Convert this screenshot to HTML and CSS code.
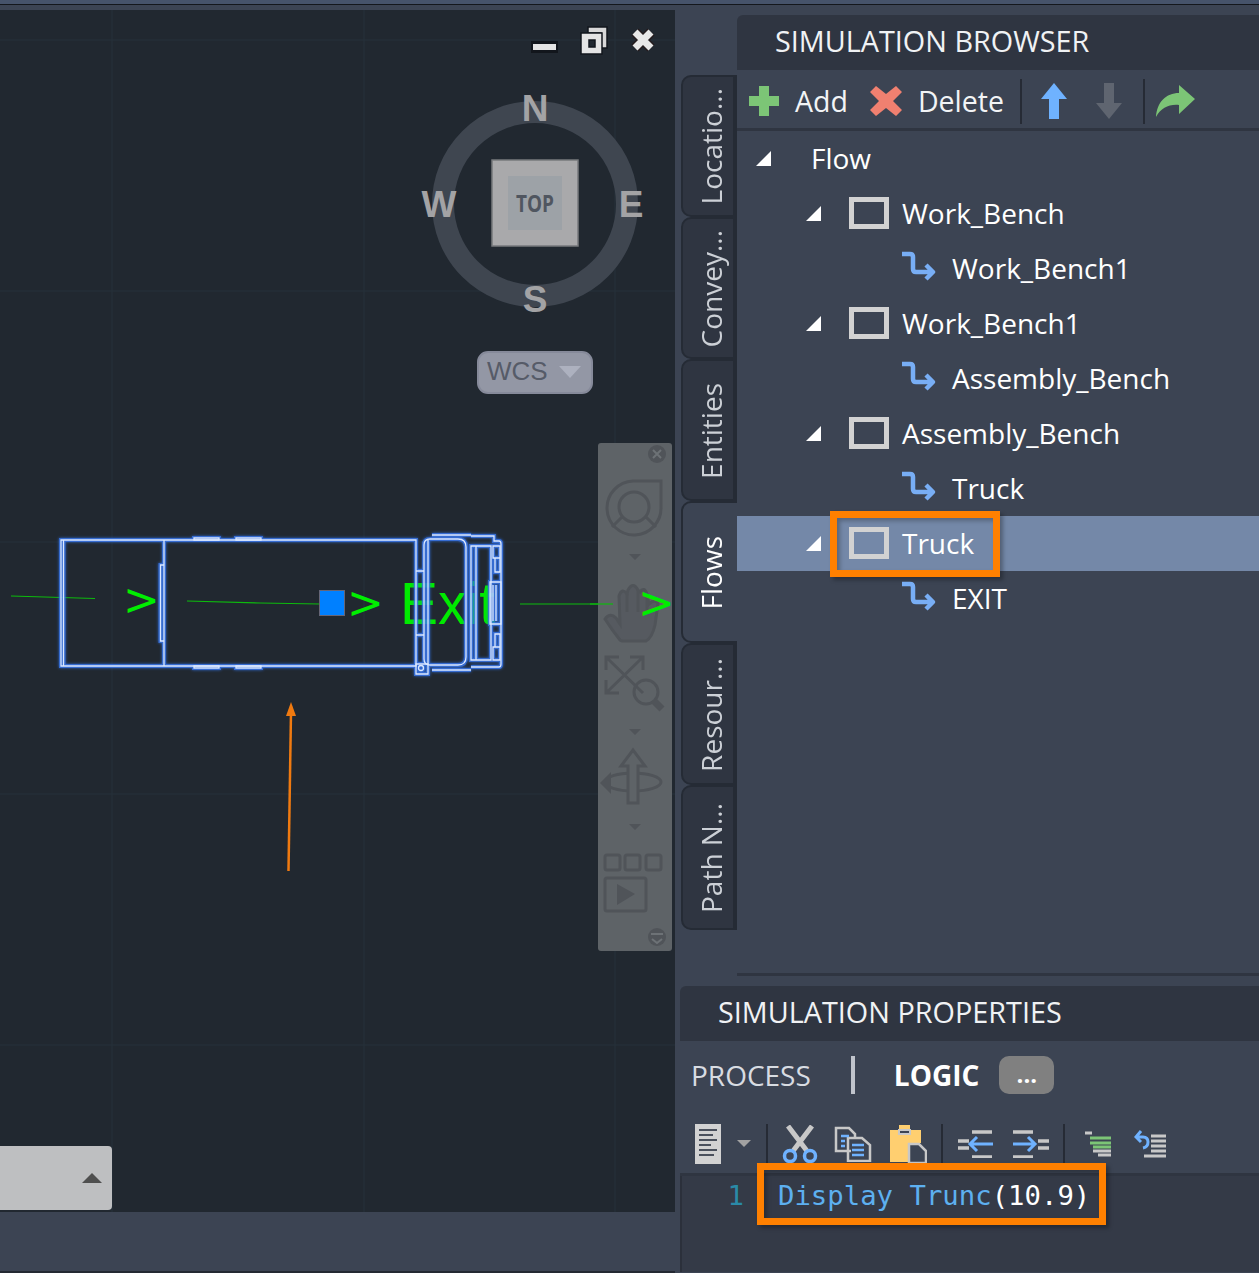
FILE: index.html
```html
<!DOCTYPE html>
<html lang="en">
<head>
<meta charset="utf-8">
<title>Simulation</title>
<link rel="stylesheet" href="styles.css">
</head>
<body>
<div class="topbar"></div>
<div class="workspace">
  <main class="viewport">
    <svg class="canvas" width="675" height="1202" viewBox="0 10 675 1202">
      <defs>
        <g id="truck">
          <path d="M61 540H416V666H61ZM63.500 540V666M164 540V666M160.500 565H164V641H160.500Z"/>
          <path d="M194 538H219V540H194ZM236 538H261V540H236ZM194 666H219V668H194ZM236 666H261V668H236Z"/>
          <path d="M416 571H424M416 635H424M424 545Q424 539 430 539H458Q466 539 466 547V657Q466 665 458 665H430Q424 665 424 659ZM428 539V665"/>
          <path d="M432 535H471M432 670H471M471 536H494V541H499Q501 541 501 544V664Q501 667 499 667H471"/>
          <path d="M471 546H491V660H471ZM476 546V660M493 546H500V558H493ZM495 558H500V572H495ZM495 634H500V647H495ZM493 647H500V660H493Z"/>
          <path d="M490 582H501V624H490ZM493 585V621M496 585V621"/>
          <path d="M416 664H428V674H416Z"/>
          <circle cx="421" cy="668" r="2.500"/>
        </g>
      </defs>
      <path class="grid" d="M112 10V1212M364 10V1212M615 10V1212M0 40H675M0 291H675M0 542H675M0 794H675M0 1045H675"/>

      <path class="route" d="M11 596L95 598.500M187 601L260 603L320 604M520 604H613"/>
      <text class="chevron" x="123" y="615">&gt;</text>
      <text class="chevron" x="347" y="618">&gt;</text>
      <text class="exit" x="400" y="624" textLength="95" lengthAdjust="spacingAndGlyphs">Exit</text>
      <rect class="marker" x="319.500" y="590.500" width="25" height="25"/>

      <use href="#truck" class="truck-glow"/>
      <use href="#truck" class="truck-line"/>

      <path class="up-line" d="M288.500 871L291 712"/>
      <path class="up-head" d="M291 702L296 716H286Z"/>

      <circle class="ring" cx="535" cy="204" r="92"/>
      <text class="cube-dir" x="535" y="121">N</text>
      <text class="cube-dir" x="439" y="217">W</text>
      <text class="cube-dir" x="631" y="217">E</text>
      <text class="cube-dir" x="535" y="312">S</text>
      <rect class="cube" x="492" y="160" width="86" height="86"/>
      <rect class="cube-face" x="508" y="176" width="54" height="54"/>
      <text class="cube-label" x="516" y="212" textLength="38" lengthAdjust="spacingAndGlyphs">TOP</text>
      <rect class="wcs" x="478" y="352" width="114" height="41" rx="10"/>
      <text class="wcs-label" x="487" y="380">WCS</text>
      <path class="wcs-arrow" d="M559 366H581L570 378Z"/>

      <rect class="win-edge" x="531" y="41" width="27" height="12"/>
      <rect class="win-fill" x="533" y="44" width="23" height="6"/>
      <path class="win-back" d="M588 27H607V48H601V33H588Z"/>
      <path class="win-front" fill-rule="evenodd" d="M581 33H602V54H581ZM589 40V47H595V40Z"/>
      <path class="win-x-edge" d="M635 32L651 48M651 32L635 48"/>
      <path class="win-x" d="M635 32L651 48M651 32L635 48"/>

      <rect class="nav-bar" x="598" y="443" width="74" height="508" rx="3"/>
      <g class="nav-lines">
        <circle class="nav-solid" cx="657" cy="454" r="9"/>
        <path class="nav-cut" d="M653 450L661 458M661 450L653 458"/>
        <path d="M633 481H661V507A27 27 0 1 1 633 481Z"/>
        <circle cx="634" cy="507" r="15"/>
        <path d="M622 517L612 527M646 517L656 527"/>
        <path class="nav-hand" d="M620 640Q612 630 605 619Q610 612 616 618L620 624L619 596Q622 587 627 594L628 590Q633 581 638 590L640 592Q644 586 647 594L649 604Q655 598 658 604L655 625Q652 638 646 641H622Z"/>
        <path d="M627 594V612M638 590V612M647 594V612"/>
        <path d="M606 657L643 693M643 657L606 693M606 670V657H619M630 657H643V670M606 680V693H619"/>
        <circle cx="646" cy="692" r="12"/>
        <path class="nav-thick" d="M654 701L662 709"/>
        <ellipse cx="633" cy="782" rx="28" ry="9"/>
        <path class="nav-fill" d="M628 803V766H621L633 750L645 766H638V803Z"/>
        <path class="nav-solid" d="M611 772V794L600 783Z"/>
        <rect x="605" y="855" width="15" height="15" rx="2"/>
        <rect x="625" y="855" width="15" height="15" rx="2"/>
        <rect x="646" y="855" width="15" height="15" rx="2"/>
        <rect x="605" y="878" width="41" height="33" rx="2"/>
        <path class="nav-solid" d="M617 884L635 894L617 905Z"/>
        <circle class="nav-solid" cx="657" cy="937" r="9"/>
        <path class="nav-cut" d="M651 934H663M652 939L657 943L662 939"/>
      </g>
      <path class="nav-solid nav-tri" d="M629 554H641L635 560ZM629 729H641L635 735ZM629 824H641L635 830Z"/>
      <path class="route" d="M590 604H613"/>
      <text class="chevron" x="638" y="618">&gt;</text>
    </svg>
    <div class="drawer"><span class="drawer-caret"></span></div>
  </main>

  <aside class="sidebar">
    <section class="browser">
      <nav class="tabs">
        <div class="tab"><span>Locatio...</span></div>
        <div class="tab"><span>Convey...</span></div>
        <div class="tab"><span>Entities</span></div>
        <div class="tab tab-active"><span>Flows</span></div>
        <div class="tab"><span>Resour...</span></div>
        <div class="tab tab-last"><span>Path N...</span></div>
      </nav>
      <div class="browser-panel">
        <h2 class="panel-title browser-title">SIMULATION BROWSER</h2>
        <div class="browser-tools">
          <svg class="tool-plus" width="32" height="32" viewBox="0 0 32 32"><path class="ico-green" d="M11 1H21V11H31V21H21V31H11V21H1V11H11Z"/></svg>
          <span class="tool-label tool-add">Add</span>
          <svg class="tool-del" width="34" height="32" viewBox="0 0 34 32"><path class="ico-red" d="M7 1L17 9L27 1L33 7L24 16L33 25L27 31L17 23L7 31L1 25L10 16L1 7Z"/></svg>
          <span class="tool-label tool-delete">Delete</span>
          <span class="tool-sep sep-a"></span>
          <svg width="28" height="38" viewBox="0 0 28 38"><path class="ico-blue" d="M14 1L27 17H19V37H9V17H1Z"/></svg>
          <svg class="tool-down" width="28" height="38" viewBox="0 0 28 38"><path class="ico-grey" d="M14 37L27 21H19V1H9V21H1Z"/></svg>
          <span class="tool-sep sep-b"></span>
          <svg class="tool-redo" width="40" height="34" viewBox="0 0 40 34"><path class="ico-green" d="M24 1L40 15L24 30V21C14 20 6 24 1 33C2 18 11 9 24 9Z"/></svg>
        </div>
        <ul class="tree">
          <li class="row lvl0"><i class="caret"></i><span>Flow</span></li>
          <li class="row lvl1"><i class="caret"></i><b class="station"></b><span>Work_Bench</span></li>
          <li class="row lvl2"><svg class="route-ico" width="36" height="36" viewBox="0 0 36 36"><path d="M1 4H9Q12 4 12 7V19Q12 22 15 22H31M25 15L32 22L25 29"/></svg><span>Work_Bench1</span></li>
          <li class="row lvl1"><i class="caret"></i><b class="station"></b><span>Work_Bench1</span></li>
          <li class="row lvl2"><svg class="route-ico" width="36" height="36" viewBox="0 0 36 36"><path d="M1 4H9Q12 4 12 7V19Q12 22 15 22H31M25 15L32 22L25 29"/></svg><span>Assembly_Bench</span></li>
          <li class="row lvl1"><i class="caret"></i><b class="station"></b><span>Assembly_Bench</span></li>
          <li class="row lvl2"><svg class="route-ico" width="36" height="36" viewBox="0 0 36 36"><path d="M1 4H9Q12 4 12 7V19Q12 22 15 22H31M25 15L32 22L25 29"/></svg><span>Truck</span></li>
          <li class="row lvl1 row-selected"><i class="caret"></i><b class="station"></b><span>Truck</span><div class="callout callout-truck"></div></li>
          <li class="row lvl2"><svg class="route-ico" width="36" height="36" viewBox="0 0 36 36"><path d="M1 4H9Q12 4 12 7V19Q12 22 15 22H31M25 15L32 22L25 29"/></svg><span>EXIT</span></li>
        </ul>
      </div>
    </section>

    <section class="props">
      <h2 class="panel-title props-title">SIMULATION PROPERTIES</h2>
      <div class="props-tabs">
        <span class="prop-tab">PROCESS</span>
        <span class="prop-sep"></span>
        <span class="prop-tab prop-active">LOGIC</span>
        <span class="prop-more">...</span>
      </div>
      <div class="props-tools">
        <svg width="28" height="42" viewBox="0 0 28 42"><rect class="ico-paper" x="1" y="1" width="26" height="40"/><path class="ico-doclines" d="M5 7H23M5 12H19M5 17H23M5 22H17M5 27H23M5 32H20"/></svg>
        <i class="mini-caret"></i>
        <span class="code-sep sep-1"></span>
        <svg class="ti-cut" width="36" height="38" viewBox="0 0 36 38"><path class="ico-cut" d="M6 1L25 26M30 1L11 26"/><circle class="ico-ring" cx="8" cy="31" r="5.500"/><circle class="ico-ring" cx="28" cy="31" r="5.500"/></svg>
        <svg class="ti-copy" width="38" height="36" viewBox="0 0 38 36"><path class="ico-outline" d="M17 25H2V2H15L21 8V12M14 12H28L36 19V35H14Z"/><path class="ico-bluel" d="M7 10H15M7 15H11M7 20H11M18 19H30M18 24H30M18 29H30"/></svg>
        <svg class="ti-paste" width="38" height="40" viewBox="0 0 38 40"><path class="ico-yellow" d="M1 6H10V1H21V6H32V19H19V38H1Z"/><path class="ico-dark" d="M10 6H21V10H10Z"/><path class="ico-page" d="M20 20H30L37 27V39H20Z"/></svg>
        <span class="code-sep sep-2"></span>
        <svg class="ti-indent" width="38" height="28" viewBox="0 0 38 28"><path class="ico-lines" d="M15 2H35M1 11H12M1 18H12M15 27H35"/><path class="ico-bluea" d="M36 14H13M20 7L13 14L20 21"/></svg>
        <svg class="ti-indent2" width="38" height="28" viewBox="0 0 38 28"><path class="ico-lines" d="M1 2H21M26 11H37M26 18H37M1 27H21"/><path class="ico-bluea" d="M1 14H23M16 7L23 14L16 21"/></svg>
        <span class="code-sep sep-3"></span>
        <svg class="ti-comment" width="28" height="26" viewBox="0 0 28 26"><path class="ico-thin" d="M1 2H8M14 24H27M9 20H27"/><path class="ico-greenl" d="M6 7H27M6 12H27M9 16H27"/></svg>
        <svg class="ti-uncomment" width="32" height="30" viewBox="0 0 32 30"><path class="ico-thin" d="M17 7H32M17 12H32M17 17H32M17 22H32M10 27H32"/><path class="ico-bluel2" d="M2 8H9Q14 8 14 13T9 19M7 2L2 8L7 13"/></svg>
      </div>
      <div class="code">
        <span class="line-no">1</span>
        <code class="code-text"><span class="kw">Display Trunc</span>(10.9)</code>
        <div class="callout callout-code"></div>
      </div>
    </section>
  </aside>
</div>
<div class="bottom-line"></div>
</body>
</html>
```
FILE: styles.css
```css
* { box-sizing: border-box; }
html, body { margin: 0; height: 1273px; overflow: hidden; }
body { background: #3c4453; color: #fff; font-family: "Open Sans", "Noto Sans", sans-serif; }

.topbar { height: 5px; background: #46536a; border-bottom: 1px solid #14171c; }
.workspace { display: flex; height: 1266px; }
.bottom-line { height: 2px; width: 675px; background: #242933; }

/* Viewport */
.viewport { position: relative; flex: 0 0 675px; height: 1202px; margin-top: 5px; background: #212830; overflow: hidden; }
.canvas { position: absolute; left: 0; top: 0; }
.grid { stroke: #27303a; stroke-width: 1; fill: none; }
.route { stroke: #0dbb0d; stroke-width: 1.200; fill: none; }
.chevron { fill: #00ee00; font: 44px "DejaVu Sans", sans-serif; }
.exit { fill: #00ea00; font: 59px "Liberation Sans", sans-serif; }
.marker { fill: #0080ff; stroke: #667; stroke-width: 1; }
.truck-glow { fill: none; stroke: #3a78ee; stroke-width: 4; opacity: .85; filter: drop-shadow(0 0 1.500px #2f6fe0); }
.truck-line { fill: none; stroke: #dbe8ff; stroke-width: 1.300; }
.up-line { stroke: #f07a10; stroke-width: 2.500; fill: none; }
.up-head { fill: #f07a10; }
.ring { fill: none; stroke: #3f4650; stroke-width: 22; }
.cube-dir { fill: #a3a3a5; font: bold 37px "Liberation Sans", sans-serif; text-anchor: middle; }
.cube { fill: #a9a9ab; stroke: #77797c; stroke-width: 1.500; }
.cube-face { fill: #9da2a7; }
.cube-label { fill: #505660; font: bold 24px "Open Sans", sans-serif; }
.wcs { fill: #9397a5; stroke: #868a9a; stroke-width: 2; }
.wcs-label { fill: #565b68; font: 26px "Liberation Sans", sans-serif; }
.wcs-arrow { fill: #adb1bf; }
.win-edge { fill: #12161c; }
.win-fill { fill: #e4e4e4; }
.win-back { fill: #d8d8d8; stroke: #12161c; stroke-width: 1.500; }
.win-front { fill: #e4e4e4; stroke: #12161c; stroke-width: 1.500; }
.win-x-edge { stroke: #241c1e; stroke-width: 10; fill: none; }
.win-x { stroke: #e8e8e8; stroke-width: 7; fill: none; }
.nav-bar { fill: #5e6367; }
.nav-lines { fill: none; stroke: #505459; stroke-width: 3; }
.nav-solid { fill: #505459; stroke: none; }
.nav-cut { stroke: #6d7276; stroke-width: 2; fill: none; }
.nav-fill { fill: #5e6367; }
.nav-hand { fill: #565a60; }
.nav-thick { stroke-width: 7; }
.drawer { position: absolute; left: 0; top: 1136px; display: flex; align-items: center; justify-content: flex-end; width: 112px; height: 64px; padding: 0 10px 0 0; background: #bebfc1; border-radius: 0 4px 4px 0; }
.drawer-caret { width: 0; height: 0; border-left: 10px solid transparent; border-right: 10px solid transparent; border-bottom: 10px solid #4f4f4f; }

/* Sidebar */
.sidebar { flex: 1; min-width: 0; padding: 10px 0 0 5px; }
.browser { display: flex; height: 961px; }
.tabs { flex: 0 0 57px; display: flex; flex-direction: column; padding: 60px 0 0 1px; }
.tab { display: flex; justify-content: center; align-items: center; height: 142px; padding: 1px 0 0 6px; background: #2f3541; border: 2px solid #252b35; border-right-width: 4px; border-radius: 10px 0 0 10px; color: #ccd0d6; font-size: 28px; line-height: 1; }
.tab span { writing-mode: vertical-rl; transform: rotate(180deg); white-space: nowrap; }
.tab-active { background: #3c4453; border-right: 0; color: #fff; padding-right: 4px; }
.tab-last { height: 145px; }
.browser-panel { flex: 1; min-width: 0; display: flex; flex-direction: column; border-bottom: 3px solid #2f3541; }
.panel-title { margin: 0; display: flex; align-items: center; padding-bottom: 4px; background: #2f3541; font-weight: 400; color: #f0f2f4; white-space: nowrap; }
.browser-title { height: 55px; padding-left: 38px; border-radius: 6px 0 0 0; font-size: 28.800px; }
.browser-tools { display: flex; align-items: center; height: 61px; padding: 4px 0 0 11px; border-bottom: 3px solid #2f3541; }
.tool-label { font-size: 28.500px; color: #f2f4f6; }
.tool-add { margin: 0 21px 0 15px; }
.tool-delete { margin: 0 16px 0 15px; }
.tool-sep { width: 2px; height: 45px; background: #262b35; }
.sep-a { margin-right: 18px; }
.tool-down { margin-left: 27px; }
.sep-b { margin-left: 20px; margin-right: 10px; }
.ico-green { fill: #7cc576; }
.ico-red { fill: #f08070; }
.ico-blue { fill: #6fb2ff; }
.ico-grey { fill: #5f6570; }

.tree { list-style: none; margin: 0; padding: 0; flex: 1; }
.row { position: relative; display: flex; align-items: center; height: 55px; padding-bottom: 2px; font-size: 28px; color: #fff; }
.row-selected { background: #7488a8; }
.caret { flex: none; width: 0; height: 0; margin-top: 2px; border-left: 15px solid transparent; border-bottom: 15px solid #fff; }
.lvl0 { padding-left: 19px; }
.lvl0 .caret { margin-right: 40px; }
.lvl1 { padding-left: 69px; }
.lvl1 .caret { margin-right: 28px; }
.station { flex: none; width: 40px; height: 32px; border: 5px solid #d2d2d2; margin-right: 13px; }
.lvl2 { padding-left: 164px; }
.route-ico { flex: none; margin-right: 15px; }
.route-ico path { fill: none; stroke: #78aef5; stroke-width: 4.500; stroke-linejoin: round; }
.callout { position: absolute; border: 7px solid #ff8000; box-shadow: 3px 3px 4px rgba(0, 0, 0, .3), inset 3px 3px 4px rgba(0, 0, 0, .25); }
.callout-truck { left: 93px; top: -5px; width: 170px; height: 66px; }

/* Properties */
.props { display: flex; flex-direction: column; height: 286px; margin-top: 10px; }
.props-title { height: 55px; padding-left: 38px; border-radius: 6px 0 0 0; font-size: 28.800px; }
.props-tabs { display: flex; align-items: center; height: 68px; padding: 0 0 0 11px; }
.prop-tab { font-size: 28px; color: #d8dce2; }
.prop-sep { width: 4px; height: 38px; margin: 0 39px 0 40px; background: #c0c4cc; }
.prop-active { font-weight: 700; color: #fff; }
.prop-more { display: flex; justify-content: center; width: 55px; height: 38px; margin-left: 20px; background: #808080; border-radius: 10px; font-size: 24px; font-weight: 700; line-height: 36px; }
.props-tools { display: flex; align-items: center; height: 67px; padding: 5px 0 0 14px; border-bottom: 3px solid #2f3541; }
.mini-caret { width: 0; height: 0; margin: 0 15px 0 15px; border-left: 7px solid transparent; border-right: 7px solid transparent; border-top: 7px solid #a2a2a2; }
.code-sep { width: 2px; height: 40px; background: #262b35; }
.ti-cut { margin-left: 14px; }
.ti-copy { margin-left: 16px; }
.ti-paste { margin-left: 17px; }
.sep-2 { margin-left: 14px; }
.ti-indent { margin-left: 14px; }
.ti-indent2 { margin-left: 17px; }
.sep-3 { margin-left: 13px; }
.ti-comment { margin-left: 19px; }
.ti-uncomment { margin-left: 22px; }
.ico-paper { fill: #d2d2d2; }
.ico-doclines { stroke: #4a505c; stroke-width: 2; fill: none; }
.ico-cut { stroke: #c8c8c8; stroke-width: 5; fill: none; }
.ico-ring { stroke: #6fb2ff; stroke-width: 3.500; fill: none; }
.ico-outline { stroke: #c8c8c8; stroke-width: 2.500; fill: none; }
.ico-bluel { stroke: #6fb2ff; stroke-width: 2.500; fill: none; }
.ico-yellow { fill: #ffcf70; }
.ico-dark { fill: #3c4453; stroke: #c8c8c8; stroke-width: 2; }
.ico-page { fill: #3c4453; stroke: #c8c8c8; stroke-width: 2.500; }
.ico-lines { stroke: #c8c8c8; stroke-width: 3.500; fill: none; }
.ico-bluea { stroke: #6fb2ff; stroke-width: 3; fill: none; }
.ico-thin { stroke: #c8c8c8; stroke-width: 3; fill: none; }
.ico-greenl { stroke: #7cc576; stroke-width: 3; fill: none; }
.ico-bluel2 { stroke: #6fb2ff; stroke-width: 3; fill: none; }
.code { position: relative; flex: 1; display: flex; align-items: flex-start; padding: 1px 0 0 0; background: #343a47; border-left: 2px solid #2b303b; font: 27.300px/38px "DejaVu Sans Mono", monospace; }
.line-no { width: 62px; text-align: right; color: #2a8aa8; }
.code-text { margin-left: 34px; font: inherit; color: #fff; white-space: nowrap; }
.kw { color: #5db0f0; }
.callout-code { left: 75px; top: -13px; width: 349px; height: 62px; }
```
